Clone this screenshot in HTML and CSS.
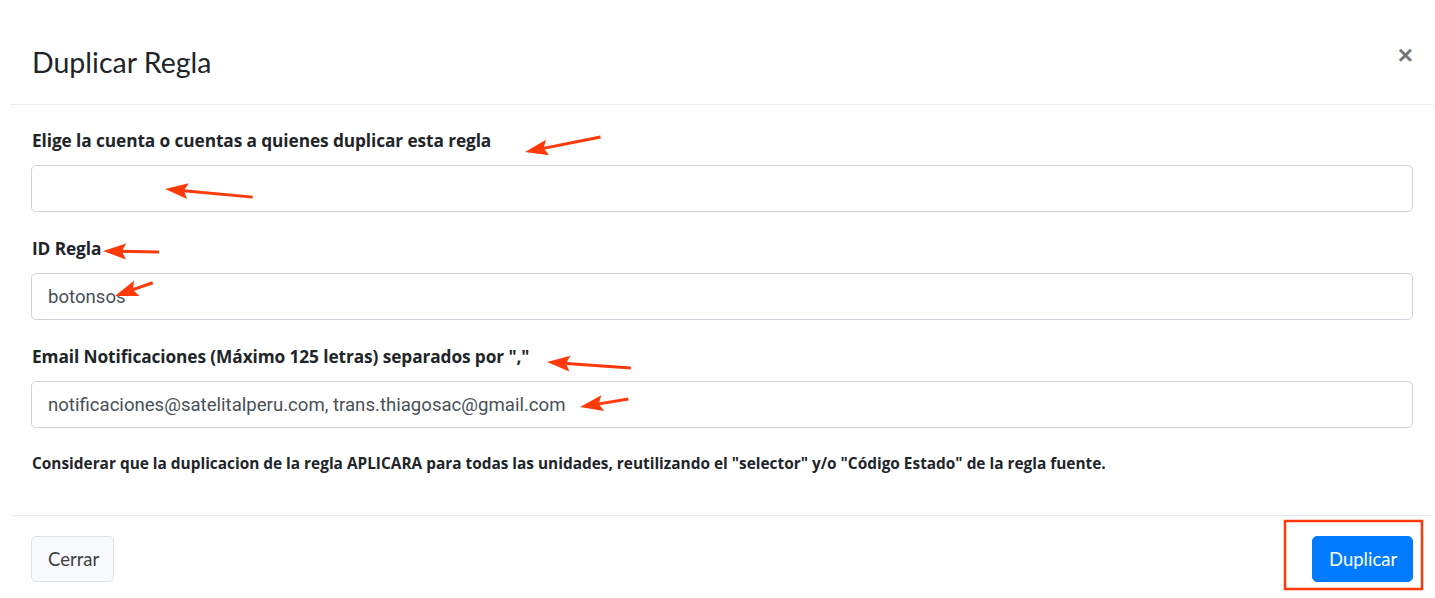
FILE: index.html
```html
<!DOCTYPE html>
<html lang="es">
<head>
    <meta charset="UTF-8">
    <meta name="viewport" content="width=device-width, initial-scale=1.0">
    <title>Duplicar Regla</title>
    <link rel="stylesheet" href="styles.css">
</head>
<body>
    <div class="modal-content">
        <!-- Header -->
        <div class="modal-header">
            <h4 class="modal-title">Duplicar Regla</h4>
            <button type="button" class="close" aria-label="Close">&times;</button>
        </div>

        <!-- Body -->
        <div class="modal-body">
            <div class="form-group">
                <label for="cuentas">Elige la cuenta o cuentas a quienes duplicar esta regla</label>
                <input type="text" id="cuentas" class="form-control">
            </div>
            <div class="form-group">
                <label for="id-regla">ID Regla</label>
                <input type="text" id="id-regla" class="form-control" value="botonsos">
            </div>
            <div class="form-group">
                <label for="emails">Email Notificaciones (Máximo 125 letras) separados por ","</label>
                <input type="text" id="emails" class="form-control" value="notificaciones@satelitalperu.com, trans.thiagosac@gmail.com">
            </div>
            <p class="note">Considerar que la duplicacion de la regla APLICARA para todas las unidades, reutilizando el "selector" y/o "Código Estado" de la regla fuente.</p>
        </div>

        <!-- Footer -->
        <div class="modal-footer">
            <button type="button" class="btn btn-light">Cerrar</button>
            <button type="button" class="btn btn-primary">Duplicar</button>
        </div>
    </div>

    <!-- Red annotation marks drawn over the screenshot -->
    <svg class="annotations" viewBox="0 0 1435 598" xmlns="http://www.w3.org/2000/svg">
        <g fill="#ff3a0a" stroke="#ff3a0a">
            <g transform="translate(525,152) rotate(-11.3)">
                <line x1="16" y1="0" x2="77" y2="0" stroke-width="3"/>
                <polygon points="0,0 23,-8 19,0 23,8" stroke="none"/>
            </g>
            <g transform="translate(165,189) rotate(5.3)">
                <line x1="16" y1="0" x2="88" y2="0" stroke-width="3"/>
                <polygon points="0,0 23,-8 19,0 23,8" stroke="none"/>
            </g>
            <g transform="translate(103,251) rotate(1)">
                <line x1="16" y1="0" x2="56" y2="0" stroke-width="3"/>
                <polygon points="0,0 23,-8 19,0 23,8" stroke="none"/>
            </g>
            <g transform="translate(115,296) rotate(-19.4)">
                <line x1="16" y1="0" x2="40" y2="0" stroke-width="3"/>
                <polygon points="0,0 23,-8 19,0 23,8" stroke="none"/>
            </g>
            <g transform="translate(547,362) rotate(4.1)">
                <line x1="16" y1="0" x2="84" y2="0" stroke-width="3"/>
                <polygon points="0,0 23,-8 19,0 23,8" stroke="none"/>
            </g>
            <g transform="translate(580,407) rotate(-9.5)">
                <line x1="16" y1="0" x2="49" y2="0" stroke-width="3"/>
                <polygon points="0,0 23,-8 19,0 23,8" stroke="none"/>
            </g>
        </g>
        <rect x="1285" y="521" width="137" height="68" fill="none" stroke="#ff3a0a" stroke-width="2.5"/>
    </svg>
</body>
</html>
```

FILE: styles.css
```css
body {
    margin: 0;
    padding: 0;
    background-color: #fff;
    font-family: 'Lato', 'Liberation Sans', sans-serif;
    color: #212529;
    position: relative;
    height: 598px;
    overflow: hidden;
}
.modal-content {
    margin: 19px 2px 0 11px;
    background: #fff;
    border-top: 1px solid transparent;
}
.modal-header {
    display: flex;
    justify-content: space-between;
    align-items: center;
    padding: 21px 20px 21px 21px;
    border-bottom: 1px solid #e9ecef;
}
.modal-title {
    margin: 0;
    font-size: 28.5px;
    font-weight: 400;
    line-height: 42px;
    color: #212529;
}
.close {
    background: none;
    border: none;
    padding: 0;
    font-size: 26px;
    font-weight: 700;
    line-height: 1;
    color: #777;
    margin-top: -14px;
    font-family: 'Liberation Sans', sans-serif;
}
.modal-body {
    padding: 24px 20px 40px 20px;
}
.form-group {
    margin-bottom: 25px;
}
label {
    display: block;
    font-family: 'Open Sans', sans-serif;
    font-size: 17.3px;
    font-weight: 700;
    line-height: 24px;
    margin-bottom: 12px;
    padding-left: 1px;
    letter-spacing: -0.1px;
}
.form-control {
    display: block;
    box-sizing: border-box;
    width: 100%;
    height: 47px;
    padding: 0 16px;
    border: 1px solid #ced4da;
    border-radius: 5px;
    font-family: 'Roboto', sans-serif;
    font-size: 18.6px;
    color: #495057;
    background: #fff;
}
.note {
    margin: 0;
    font-family: 'Open Sans', sans-serif;
    font-size: 15.4px;
    font-weight: 700;
    line-height: 22px;
    padding-left: 1px;
}
.modal-footer {
    display: flex;
    justify-content: space-between;
    padding: 20px 20px;
    border-top: 1px solid #e9ecef;
}
.btn {
    height: 46px;
    padding: 0 16px;
    border-radius: 5px;
    font-family: 'Lato', sans-serif;
    font-size: 18.5px;
    cursor: pointer;
}
.btn-light {
    background: #f8f9fa;
    border: 1px solid #dee2e6;
    color: #3a3f44;
    width: 83px;
}
.btn-primary {
    background: #007bff;
    border: 1px solid #007bff;
    color: #fff;
    width: 101px;
}
.annotations {
    position: absolute;
    top: 0;
    left: 0;
    width: 1435px;
    height: 598px;
    pointer-events: none;
}
```
